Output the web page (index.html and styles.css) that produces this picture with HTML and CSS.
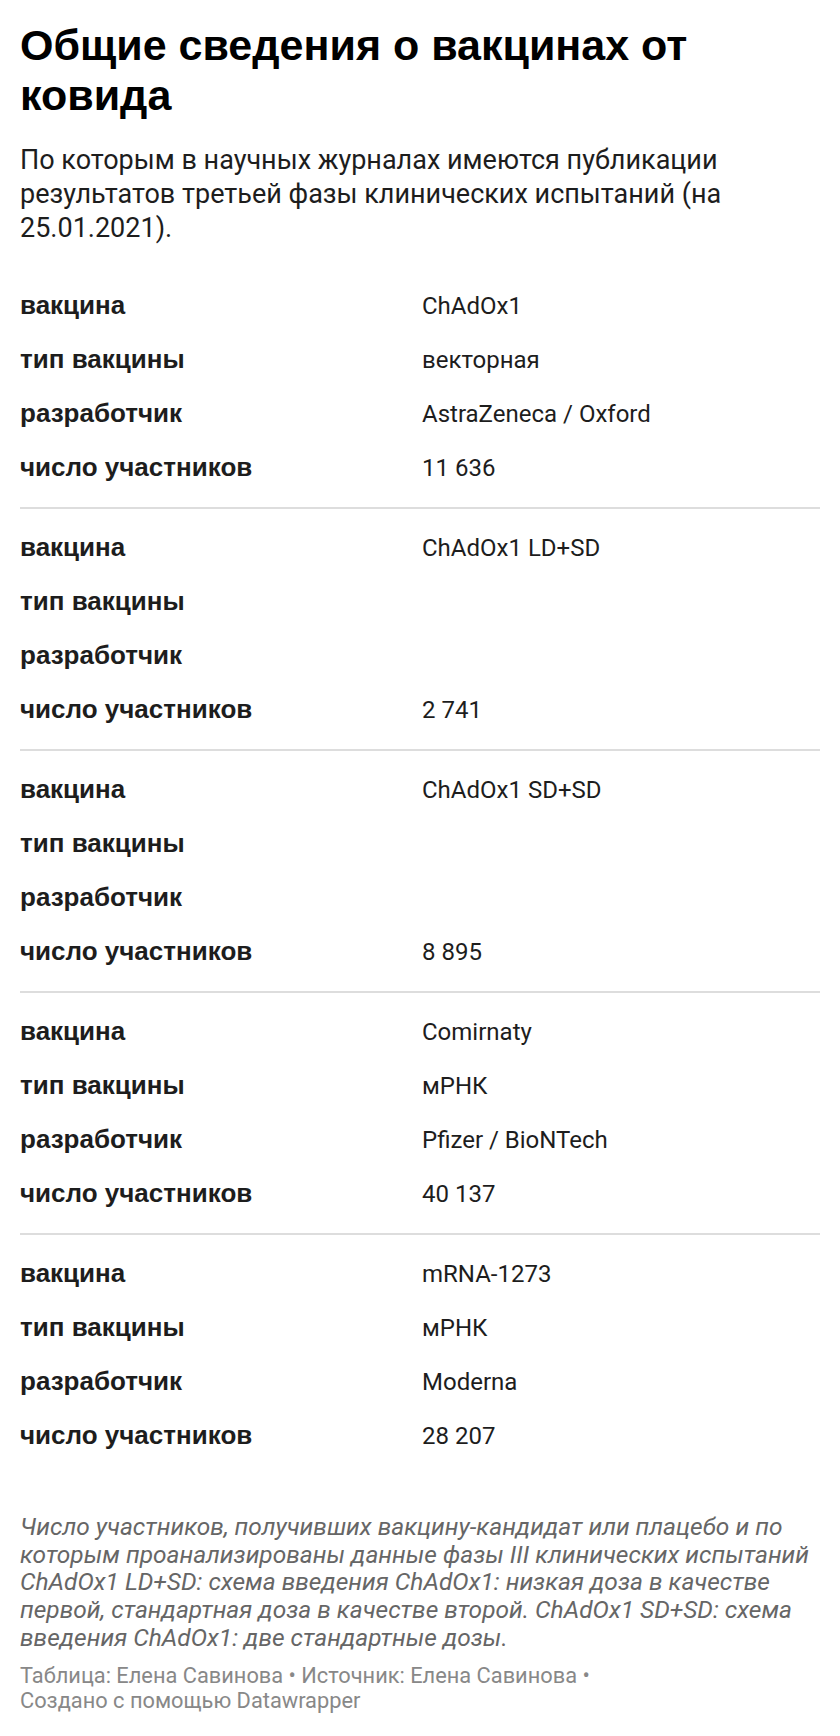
FILE: index.html
```html
<!DOCTYPE html>
<html lang="ru">
<head>
    <meta charset="UTF-8">
    <meta name="viewport" content="width=device-width, initial-scale=1.0">
    <title>Общие сведения о вакцинах от ковида</title>
    <link rel="stylesheet" href="styles.css">
</head>
<body>
    <div class="chart">
        <h1 class="title">Общие сведения о вакцинах от ковида</h1>
        <p class="intro">По которым в научных журналах имеются публикации результатов третьей фазы клинических испытаний (на 25.01.2021).</p>

        <div class="table">
            <div class="block">
                <div class="row"><span class="label">вакцина</span><span class="value">ChAdOx1</span></div>
                <div class="row"><span class="label">тип вакцины</span><span class="value">векторная</span></div>
                <div class="row"><span class="label">разработчик</span><span class="value">AstraZeneca / Oxford</span></div>
                <div class="row"><span class="label">число участников</span><span class="value">11 636</span></div>
            </div>
            <div class="block">
                <div class="row"><span class="label">вакцина</span><span class="value">ChAdOx1 LD+SD</span></div>
                <div class="row"><span class="label">тип вакцины</span><span class="value"></span></div>
                <div class="row"><span class="label">разработчик</span><span class="value"></span></div>
                <div class="row"><span class="label">число участников</span><span class="value">2 741</span></div>
            </div>
            <div class="block">
                <div class="row"><span class="label">вакцина</span><span class="value">ChAdOx1 SD+SD</span></div>
                <div class="row"><span class="label">тип вакцины</span><span class="value"></span></div>
                <div class="row"><span class="label">разработчик</span><span class="value"></span></div>
                <div class="row"><span class="label">число участников</span><span class="value">8 895</span></div>
            </div>
            <div class="block">
                <div class="row"><span class="label">вакцина</span><span class="value">Comirnaty</span></div>
                <div class="row"><span class="label">тип вакцины</span><span class="value">мРНК</span></div>
                <div class="row"><span class="label">разработчик</span><span class="value">Pfizer / BioNTech</span></div>
                <div class="row"><span class="label">число участников</span><span class="value">40 137</span></div>
            </div>
            <div class="block">
                <div class="row"><span class="label">вакцина</span><span class="value">mRNA-1273</span></div>
                <div class="row"><span class="label">тип вакцины</span><span class="value">мРНК</span></div>
                <div class="row"><span class="label">разработчик</span><span class="value">Moderna</span></div>
                <div class="row"><span class="label">число участников</span><span class="value">28 207</span></div>
            </div>
        </div>

        <p class="notes">Число участников, получивших вакцину-кандидат или плацебо и по которым проанализированы данные фазы III клинических испытаний ChAdOx1 LD+SD: схема введения ChAdOx1: низкая доза в качестве первой, стандартная доза в качестве второй. ChAdOx1 SD+SD: схема введения ChAdOx1: две стандартные дозы.</p>
        <p class="byline">Таблица: Елена Савинова • Источник: Елена Савинова •<br>Создано с помощью Datawrapper</p>
    </div>
</body>
</html>
```

FILE: styles.css
```css
body {
    margin: 0;
    background-color: #fff;
    font-family: Roboto, "Liberation Sans", sans-serif;
    color: #1d1d1d;
}

.chart {
    padding: 20px 20px 0;
}

.title {
    font-family: "Liberation Sans", Arial, sans-serif;
    font-size: 43px;
    line-height: 50px;
    font-weight: bold;
    color: #000;
    margin: 0 0 23px;
}

.intro {
    font-size: 27px;
    line-height: 34px;
    color: #1d1d1d;
    margin: 0 0 22px;
}

.block {
    padding: 11px 0 13px;
    border-bottom: 2px solid #ddd;
}

.block:last-child {
    border-bottom: none;
}

.row {
    display: grid;
    grid-template-columns: 402px 1fr;
    align-items: baseline;
    height: 54px;
    line-height: 54px;
}

.label {
    font-family: "Liberation Sans", Arial, sans-serif;
    font-weight: bold;
    font-size: 26px;
    color: #1d1d1d;
}

.value {
    font-size: 24px;
    color: #1d1d1d;
}

.notes {
    font-style: italic;
    font-size: 24.5px;
    line-height: 27.7px;
    color: #666;
    margin: 38px 0 11px;
}

.byline {
    font-size: 21.8px;
    line-height: 25.5px;
    color: #888;
    margin: 0;
}
```
